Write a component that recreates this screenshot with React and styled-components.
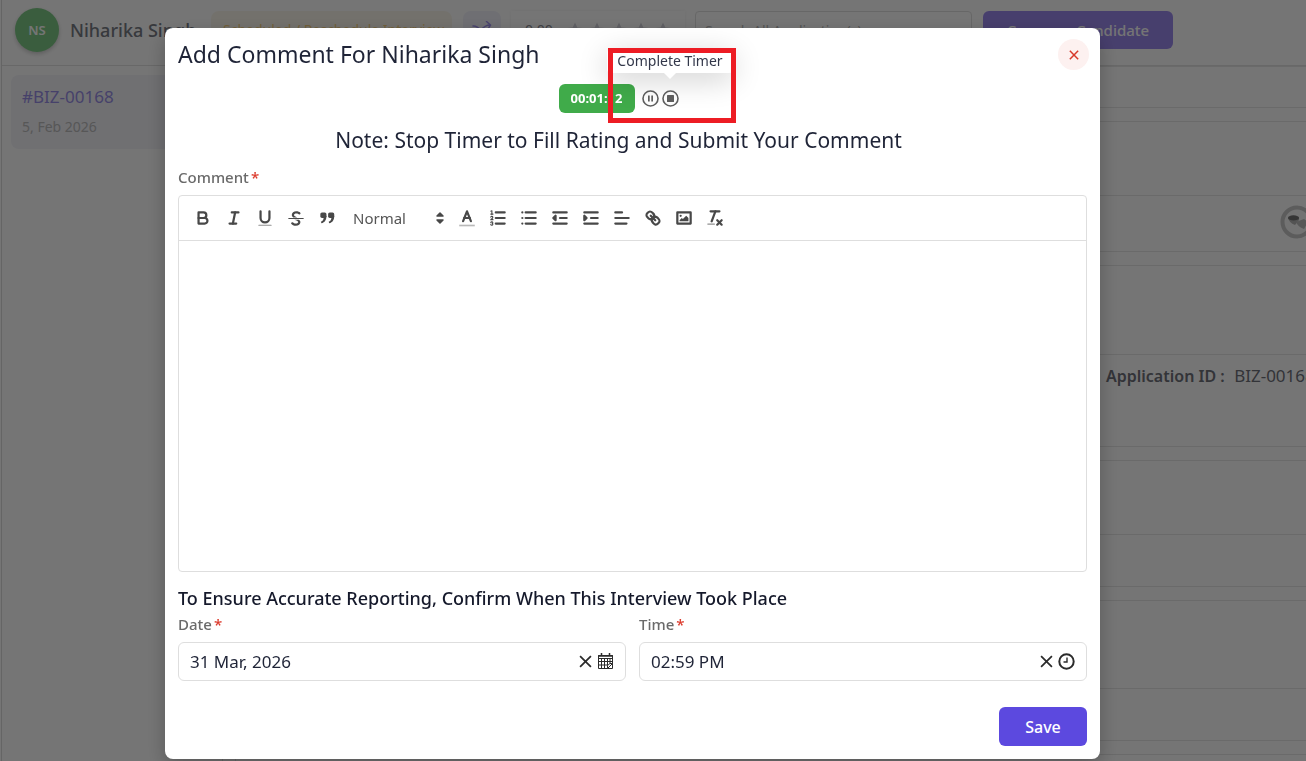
import React, { useState } from "react";
import styled, { createGlobalStyle } from "styled-components";

const GlobalStyle = createGlobalStyle`
  *, *::before, *::after { box-sizing: border-box; }
  body {
    margin: 0;
    overflow: hidden;
    background: #fff;
    font-family: "Noto Sans", "Open Sans", sans-serif;
    font-size: 16px;
    line-height: 24px;
    color: #1f2437;
  }
  h1, h2, h3, p { margin: 0; font-weight: 400; }
  button, input, select, textarea { font: inherit; color: inherit; }
  button { padding: 0; border: 0; background: none; cursor: pointer; }
  svg { display: block; }
`;

/* ---------- page behind the dialog ---------- */

const Page = styled.div`
  height: 100vh;
  margin-left: 1px;
  border-left: 1px solid #dcdcdc;
  overflow: hidden;
`;

const TopBar = styled.header`
  display: flex;
  align-items: flex-start;
  height: 66px;
  padding: 8px 13px;
  border-bottom: 1px solid #e2e2e2;
  white-space: nowrap;
`;

const Avatar = styled.span`
  flex: none;
  width: 44px;
  height: 44px;
  border-radius: 50%;
  background: #7ecb87;
  color: #fff;
  font-size: 13px;
  font-weight: 600;
  line-height: 44px;
  text-align: center;
  box-shadow: 0 2px 4px rgba(0, 0, 0, 0.2);
`;

const CandidateName = styled.h2`
  width: 141px;
  margin: 10px 0 0 11px;
  font-size: 18px;
  font-weight: 500;
  color: #797c86;
`;

const StatusBadge = styled.span`
  width: 241px;
  height: 38px;
  margin: 3px 11px 0 0;
  padding: 7px 12px;
  border-radius: 8px;
  background: #fbf7ec;
  color: #f5cf7f;
  font-size: 14px;
`;

const ShuffleButton = styled.button`
  display: grid;
  place-items: center;
  width: 38px;
  height: 38px;
  margin: 3px 10px 0 0;
  border-radius: 8px;
  background: #f1f1fa;
  color: #a093ee;
`;

const RatingBox = styled.div`
  display: flex;
  align-items: center;
  gap: 8px;
  width: 174px;
  height: 38px;
  margin: 3px 10px 0 0;
  padding: 0 14px;
  font-size: 14px;
  color: #8a8c94;
  box-shadow: 0 0 4px rgba(0, 0, 0, 0.06);
`;

const Stars = styled.span`
  display: flex;
  gap: 6px;
  margin-left: 6px;
`;

const SearchInput = styled.input`
  width: 277px;
  height: 38px;
  margin: 3px 11px 0 0;
  padding: 0 9px;
  border: 1px solid #e0e0e0;
  border-radius: 4px;
  background: transparent;
  font-size: 14px;
  &::placeholder { color: #b8b8b8; opacity: 1; }
`;

const CompareButton = styled.button`
  width: 190px;
  height: 38px;
  margin-top: 3px;
  border-radius: 6px;
  background: #9c8aee;
  color: #fff;
  font-size: 15px;
  font-weight: 500;
`;

const Columns = styled.div`
  display: flex;
`;

const SideList = styled.aside`
  flex: none;
  width: 221px;
  height: 100vh;
  padding: 9px;
  border-right: 1px solid #e2e2e2;
`;

const ApplicationCard = styled.a`
  display: flex;
  flex-direction: column;
  gap: 6px;
  height: 74px;
  padding: 10px 11px;
  border-radius: 8px;
  background: #f3f3f9;
  color: #9a8fe8;
  font-size: 17px;
  text-decoration: none;
`;

const CardDate = styled.span`
  font-size: 14px;
  color: #bdbdbd;
`;

const Main = styled.main`
  flex: 1;
  min-width: 0;
  padding-left: 12px;
  overflow: hidden;
`;

const Panel = styled.section`
  width: calc(100% + 12px);
  margin-bottom: 13px;
  border: 1px solid #e7e7e7;
`;

const PanelRow = styled.div`
  display: flex;
  justify-content: flex-end;
  height: ${(p) => p.$h}px;
  padding: 9px 3px 9px 0;
  color: #6f717b;
  white-space: nowrap;
  & + & { border-top: 1px solid #e7e7e7; }
`;

const ApplicationId = styled.p`
  width: 208px;
  font-size: 17px;
  b { margin-right: 5px; font-size: 16px; font-weight: 600; }
`;

/* ---------- dialog ---------- */

const Backdrop = styled.div`
  position: fixed;
  inset: 0;
  padding: 28px 206px 0 165px;
  background: rgba(0, 0, 0, 0.54);
`;

const Dialog = styled.form`
  display: flex;
  flex-direction: column;
  padding: 11px 13px 13px;
  border-radius: 8px;
  background: #fff;
  box-shadow: 0 8px 20px rgba(0, 0, 0, 0.25);
`;

const DialogHeader = styled.div`
  display: flex;
  justify-content: space-between;
  align-items: flex-start;
  height: 32px;
  margin-right: -2px;
`;

const Title = styled.h1`
  font-size: 23px;
  line-height: 31px;
`;

const CloseButton = styled.button`
  display: grid;
  place-items: center;
  width: 31px;
  height: 31px;
  border-radius: 50%;
  background: #fdf1f0;
  color: #d8392b;
`;

const TimerBlock = styled.div`
  display: flex;
  flex-direction: column;
  align-items: center;
  padding: 13px 28px 0 0;
`;

const TimerRow = styled.div`
  display: flex;
  align-items: center;
  gap: 3px;
`;

const TimerValue = styled.span`
  min-width: 76px;
  margin-right: 4px;
  border-radius: 6px;
  background: #40ab4a;
  color: #fff;
  font-size: 13px;
  font-weight: 700;
  line-height: 29px;
  text-align: center;
`;

const RoundButton = styled.button`
  position: relative;
  color: #5f5f5f;
`;

const Tooltip = styled.span`
  position: absolute;
  left: 50%;
  bottom: 34px;
  z-index: 1;
  transform: translateX(-50%);
  width: 126px;
  border-radius: 4px;
  background: #fff;
  color: #33384a;
  font-size: 14px;
  line-height: 24px;
  text-align: center;
  white-space: nowrap;
  box-shadow: 0 6px 30px rgba(0, 0, 0, 0.2);
  &::after {
    content: "";
    position: absolute;
    top: 100%;
    left: 50%;
    margin-left: -6px;
    border: 6px solid transparent;
    border-top-color: #fff;
    border-bottom: 0;
  }
`;

const Highlight = styled.span`
  position: absolute;
  left: -54px;
  top: -42px;
  z-index: 2;
  width: 128px;
  height: 75px;
  border: 5px solid #ed1c24;
  pointer-events: none;
`;

const Note = styled.p`
  margin: 11px 0;
  font-size: 21px;
  line-height: 32px;
`;

const Field = styled.div`
  display: flex;
  flex-direction: column;
  flex: 1;
  min-width: 0;
`;

const Label = styled.label`
  margin-bottom: 8px;
  font-size: 15px;
  font-weight: 500;
  line-height: 20px;
  color: #6a6a6a;
`;

const Required = styled.span`
  margin-left: 2px;
  color: #dc3a2c;
`;

const Editor = styled.div`
  border: 1px solid #dedede;
  border-radius: 4px;
`;

const Toolbar = styled.div`
  display: flex;
  align-items: center;
  height: 45px;
  padding: 0 8px;
  border-bottom: 1px solid #dedede;
`;

const ToolButton = styled.button`
  display: grid;
  place-items: center;
  width: 31px;
  height: 24px;
  .s, .t { fill: none; stroke: #484848; stroke-width: 2; stroke-linecap: round; stroke-linejoin: round; }
  .t { stroke-width: 1; }
  .f { fill: #484848; }
`;

const FormatPicker = styled.span`
  display: flex;
  align-items: center;
  width: 93px;
  margin: 0 5px 0 11px;
  color: #555;
`;

const FormatSelect = styled.select`
  flex: 1;
  min-width: 0;
  padding: 0;
  border: 0;
  background: none;
  appearance: none;
  font-size: 15px;
`;

const EditorArea = styled.textarea`
  display: block;
  width: 100%;
  height: 330px;
  padding: 12px;
  border: 0;
  outline: 0;
  background: transparent;
  resize: none;
`;

const SectionTitle = styled.h3`
  margin-top: 14px;
  font-size: 18px;
  line-height: 24px;
  font-weight: 500;
  color: #15192b;
`;

const FieldRow = styled.div`
  display: flex;
  gap: 13px;
  margin-top: 4px;
`;

const InputBox = styled.div`
  display: flex;
  align-items: center;
  gap: 5px;
  height: 39px;
  padding: 0 11px;
  border: 1px solid #dedede;
  border-radius: 6px;
  color: #2b2b2b;
`;

const TextInput = styled.input`
  flex: 1;
  min-width: 0;
  padding: 0;
  border: 0;
  outline: 0;
  background: none;
  font-size: 17px;
  color: #1f2437;
`;

const Footer = styled.div`
  display: flex;
  justify-content: flex-end;
  margin-top: 26px;
`;

const SaveButton = styled.button`
  width: 88px;
  height: 39px;
  border-radius: 6px;
  background: #5c49df;
  color: #fff;
  font-size: 16px;
  font-weight: 500;
`;

/* ---------- icons ---------- */

const toolIcons = {
  Bold: (
    <>
      <path className="s" d="M5,4H9.5A2.5,2.5,0,0,1,12,6.5v0A2.5,2.5,0,0,1,9.5,9H5A0,0,0,0,1,5,9V4A0,0,0,0,1,5,4Z" />
      <path className="s" d="M5,9h5.5A2.5,2.5,0,0,1,13,11.5v0A2.5,2.5,0,0,1,10.5,14H5a0,0,0,0,1,0,0V9A0,0,0,0,1,5,9Z" />
    </>
  ),
  Italic: (
    <>
      <line className="s" x1="7" x2="13" y1="4" y2="4" />
      <line className="s" x1="5" x2="11" y1="14" y2="14" />
      <line className="s" x1="8" x2="10" y1="14" y2="4" />
    </>
  ),
  Underline: (
    <>
      <path className="s" d="M5,3V9a4.012,4.012,0,0,0,4,4H9a4.012,4.012,0,0,0,4-4V3" />
      <rect className="f" opacity="0.6" height="1" width="12" x="3" y="15" rx="0.5" />
    </>
  ),
  Strike: (
    <>
      <line className="t" x1="2.5" x2="15.5" y1="9.5" y2="9.5" />
      <path className="f" d="M6.5,8.5C6,8 5.2,7.300 5.200,6.300C5.200,4.300 7,3 9.200,3C10.800,3 12.200,3.500 12.900,4.300C13.400,4.900 12.900,5.900 12,5.800C11.300,5.700 10.800,5 9.300,5C8,5 7.200,5.600 7.200,6.400C7.200,7.500 8.500,7.800 10,8.500Z" />
      <path className="f" d="M11.500,10.500C12.400,11 13,11.700 13,12.600C13,14.600 11.200,16 8.900,16C7,16 5.400,15.200 4.700,14.100C4.300,13.300 5.100,12.500 5.900,12.800C6.600,13.100 7.200,14 8.900,14C10.200,14 11,13.400 11,12.600C11,11.700 9.500,11.200 7.500,10.500Z" />
    </>
  ),
  Blockquote: (
    <>
      <rect className="f" height="5" width="5.500" x="3" y="4" rx="1.500" />
      <rect className="f" height="5" width="5.500" x="10" y="4" rx="1.500" />
      <path className="f" d="M8.500,7C8.500,11 7,13 4,13.800L3.500,12.300C5.500,11.500 6,10 6,8Z" />
      <path className="f" d="M15.500,7C15.500,11 14,13 11,13.800L10.500,12.300C12.500,11.500 13,10 13,8Z" />
    </>
  ),
  "Text color": (
    <>
      <rect x="2" y="15" width="14" height="1.500" fill="#b9b9b9" />
      <polyline className="s" points="5.5 11.800 9 3 12.500 11.800" />
      <line className="s" x1="11.600" x2="6.400" y1="9" y2="9" />
    </>
  ),
  "Ordered list": (
    <>
      <line className="s" x1="7" x2="15" y1="4" y2="4" />
      <line className="s" x1="7" x2="15" y1="9" y2="9" />
      <line className="s" x1="7" x2="15" y1="14" y2="14" />
      <line className="t" x1="2.5" x2="4.5" y1="5.5" y2="5.5" />
      <path className="f" d="M3.5,6A0.5,0.5,0,0,1,3,5.500V3.085l-0.276.138A0.5,0.5,0,0,1,2.053,3c-0.124-.247-0.023-0.324.224-0.447l1-.5A0.5,0.5,0,0,1,4,2.500v3A0.5,0.5,0,0,1,3.500,6Z" />
      <path className="t" d="M4.5,10.5h-2c0-.234,1.850-1.076,1.850-2.234A0.959,0.959,0,0,0,2.500,8.156" />
      <path className="t" d="M2.5,14.846a0.959,0.959,0,0,0,1.850-.109A0.700,0.700,0,0,0,3.750,14a0.688,0.688,0,0,0,.600-0.736,0.959,0.959,0,0,0-1.850-.109" />
    </>
  ),
  "Bullet list": (
    <>
      <line className="s" x1="6" x2="15" y1="4" y2="4" />
      <line className="s" x1="6" x2="15" y1="9" y2="9" />
      <line className="s" x1="6" x2="15" y1="14" y2="14" />
      <line className="s" x1="3" x2="3" y1="4" y2="4" />
      <line className="s" x1="3" x2="3" y1="9" y2="9" />
      <line className="s" x1="3" x2="3" y1="14" y2="14" />
    </>
  ),
  Outdent: (
    <>
      <line className="s" x1="3" x2="15" y1="14" y2="14" />
      <line className="s" x1="3" x2="15" y1="4" y2="4" />
      <line className="s" x1="9" x2="15" y1="9" y2="9" />
      <polygon fill="#484848" stroke="#484848" strokeWidth="2" strokeLinejoin="round" points="5 7 5 11 3 9 5 7" />
    </>
  ),
  Indent: (
    <>
      <line className="s" x1="3" x2="15" y1="14" y2="14" />
      <line className="s" x1="3" x2="15" y1="4" y2="4" />
      <line className="s" x1="9" x2="15" y1="9" y2="9" />
      <polygon fill="#484848" stroke="#484848" strokeWidth="2" strokeLinejoin="round" points="3 7 3 11 5 9 3 7" />
    </>
  ),
  Align: (
    <>
      <line className="s" x1="3" x2="9" y1="4" y2="4" />
      <line className="s" x1="3" x2="15" y1="9" y2="9" />
      <line className="s" x1="3" x2="13" y1="14" y2="14" />
    </>
  ),
  Link: (
    <>
      <line className="s" x1="7" x2="11" y1="7" y2="11" />
      <path className="s" d="M8.9,4.577a3.476,3.476,0,0,1,.36,4.679A3.476,3.476,0,0,1,4.577,8.900C3.185,7.500,2.035,6.400,4.217,4.217S7.500,3.185,8.900,4.577Z" />
      <path className="s" d="M13.423,9.100a3.476,3.476,0,0,0-4.679-.36,3.476,3.476,0,0,0,.360,4.679c1.392,1.392,2.500,2.542,4.679.360S14.815,10.500,13.423,9.100Z" />
    </>
  ),
  Image: (
    <>
      <rect className="s" height="10" width="12" x="3" y="4" />
      <circle className="f" cx="6" cy="7" r="1" />
      <polyline className="f" points="5 12 5 11 7 9 8 10 11 7 13 9 13 12 5 12" />
    </>
  ),
  "Clear formatting": (
    <>
      <line className="s" x1="5" x2="13" y1="3" y2="3" />
      <line className="s" x1="6" x2="9.350" y1="12" y2="3" />
      <line className="s" x1="11" x2="15" y1="11" y2="15" />
      <line className="s" x1="15" x2="11" y1="11" y2="15" />
      <rect className="f" opacity="0.6" height="1" width="7" x="2" y="14" rx="0.5" />
    </>
  ),
};

const Tool = ({ name }) => (
  <ToolButton type="button" aria-label={name}>
    <svg width="20" height="20" viewBox="0 0 18 18">{toolIcons[name]}</svg>
  </ToolButton>
);

const Cross = ({ size, weight }) => (
  <svg width={size} height={size} viewBox="0 0 12 12" stroke="currentColor" strokeWidth={weight} fill="none">
    <path d="M1 1L11 11M11 1L1 11" />
  </svg>
);

const Star = () => (
  <svg width="16" height="16" viewBox="0 0 16 16" fill="#d2d2da">
    <path d="M8 0.500L10.300 5.400L15.600 6L11.700 9.700L12.700 15L8 12.400L3.300 15L4.300 9.700L0.400 6L5.700 5.400Z" />
  </svg>
);

const Shuffle = () => (
  <svg width="20" height="18" viewBox="0 0 20 18" fill="none" stroke="currentColor" strokeWidth="1.500" strokeLinecap="round" strokeLinejoin="round">
    <path d="M1 5C8 4 9 14 18 14M1 14C8 14 9 4 18 4M14.500 0.500L18.500 4L16 8M15 11L18.500 14L15 17" />
  </svg>
);

const PauseIcon = () => (
  <svg width="17" height="17" viewBox="0 0 17 17">
    <circle cx="8.500" cy="8.500" r="7.500" fill="none" stroke="currentColor" strokeWidth="1.600" />
    <path d="M6 5.500H7.700V11.500H6ZM9.300 5.500H11V11.500H9.300Z" fill="currentColor" />
  </svg>
);

const StopIcon = () => (
  <svg width="17" height="17" viewBox="0 0 17 17">
    <circle cx="8.500" cy="8.500" r="7.500" fill="none" stroke="currentColor" strokeWidth="1.600" />
    <rect x="5" y="5" width="7" height="7" rx="0.500" fill="currentColor" />
  </svg>
);

const SortIcon = () => (
  <svg width="12" height="20" viewBox="0 0 12 20" fill="#484848" stroke="#484848" strokeWidth="1.500" strokeLinejoin="round">
    <path d="M6 5L9 8H3ZM3 12H9L6 15Z" />
  </svg>
);

const CalendarIcon = () => (
  <svg width="17" height="17" viewBox="0 0 17 17" fill="none" stroke="currentColor" strokeWidth="1">
    <path d="M1.500 2.500H15.500V10.500L10.500 15.500H1.500ZM15.500 10.500V15.500H10.500V12.500L13 10.500H15.500" />
    <path d="M1.500 5.500H15.500M1.500 8.500H15.500M1.500 12H10.500M4.500 5.500V15.500M7.500 5.500V15.500M10.500 5.500V12.500M13 5.500V10.500" />
    <path d="M1 3H16M4.500 0V3M12.500 0V3" strokeWidth="1.500" />
  </svg>
);

const ClockIcon = () => (
  <svg width="17" height="17" viewBox="0 0 17 17" fill="none" stroke="currentColor">
    <circle cx="8.500" cy="8.500" r="7.200" strokeWidth="2" />
    <path d="M9 4.500V9H5.500" strokeWidth="1.400" />
  </svg>
);

const ProfileIcon = () => (
  <svg width="34" height="34" viewBox="0 0 34 34">
    <circle cx="17" cy="17" r="14.500" fill="#fafafa" stroke="#c9c9c9" strokeWidth="4" />
    <path d="M8 12Q13 8 19 12V15L15 20Q9 18 8 12Z" fill="#b5b5b5" />
    <ellipse cx="13.500" cy="13" rx="5.500" ry="2.500" fill="#777" />
    <path d="M16 17L24 14L28 17L24 24Q18 22 16 17Z" fill="#bdbdbd" />
  </svg>
);

export default function App() {
  const [comment, setComment] = useState("");
  const [date, setDate] = useState("31 Mar, 2026");
  const [time, setTime] = useState("02:59 PM");

  return (
    <>
      <GlobalStyle />
      <Page>
        <TopBar>
          <Avatar>NS</Avatar>
          <CandidateName>Niharika Singh</CandidateName>
          <StatusBadge>Scheduled / Reschedule Interview</StatusBadge>
          <ShuffleButton type="button" aria-label="Shuffle"><Shuffle /></ShuffleButton>
          <RatingBox>
            0.00
            <Stars>{[1, 2, 3, 4, 5].map((n) => <Star key={n} />)}</Stars>
          </RatingBox>
          <SearchInput aria-label="Search" placeholder="Search All Application(s)" />
          <CompareButton type="button">Compare Candidate</CompareButton>
        </TopBar>
        <Columns>
          <SideList>
            <ApplicationCard href="#application">
              #BIZ-00168
              <CardDate>5, Feb 2026</CardDate>
            </ApplicationCard>
          </SideList>
          <Main>
            <Panel><PanelRow $h={40} /></Panel>
            <Panel>
              <PanelRow $h={73} />
              <PanelRow $h={56}><ProfileIcon /></PanelRow>
            </Panel>
            <Panel>
              <PanelRow $h={88} />
              <PanelRow $h={92}>
                <ApplicationId><b>Application ID :</b> BIZ-00168</ApplicationId>
              </PanelRow>
            </Panel>
            <Panel>
              <PanelRow $h={73} />
              <PanelRow $h={52} />
            </Panel>
            <Panel>
              <PanelRow $h={87} />
              <PanelRow $h={52} />
            </Panel>
            <Panel><PanelRow $h={73} /></Panel>
          </Main>
        </Columns>
      </Page>

      <Backdrop>
        <Dialog role="dialog" aria-labelledby="dialog-title" onSubmit={(e) => e.preventDefault()}>
          <DialogHeader>
            <Title id="dialog-title">Add Comment For Niharika Singh</Title>
            <CloseButton type="button" aria-label="Close"><Cross size={10} weight={1.8} /></CloseButton>
          </DialogHeader>

          <TimerBlock>
            <TimerRow>
              <TimerValue>00:01:12</TimerValue>
              <RoundButton type="button" aria-label="Pause Timer"><PauseIcon /></RoundButton>
              <RoundButton type="button" aria-label="Complete Timer">
                <StopIcon />
                <Tooltip role="tooltip">Complete Timer</Tooltip>
                <Highlight />
              </RoundButton>
            </TimerRow>
            <Note>Note: Stop Timer to Fill Rating and Submit Your Comment</Note>
          </TimerBlock>

          <Field>
            <Label htmlFor="comment">Comment<Required>*</Required></Label>
            <Editor>
              <Toolbar>
                {["Bold", "Italic", "Underline", "Strike", "Blockquote"].map((n) => <Tool key={n} name={n} />)}
                <FormatPicker>
                  <FormatSelect aria-label="Text style" defaultValue="Normal">
                    <option>Normal</option>
                    <option>Heading 1</option>
                    <option>Heading 2</option>
                  </FormatSelect>
                  <SortIcon />
                </FormatPicker>
                {["Text color", "Ordered list", "Bullet list", "Outdent", "Indent", "Align", "Link", "Image", "Clear formatting"].map((n) => <Tool key={n} name={n} />)}
              </Toolbar>
              <EditorArea id="comment" value={comment} onChange={(e) => setComment(e.target.value)} />
            </Editor>
          </Field>

          <SectionTitle>To Ensure Accurate Reporting, Confirm When This Interview Took Place</SectionTitle>
          <FieldRow>
            <Field>
              <Label htmlFor="date">Date<Required>*</Required></Label>
              <InputBox>
                <TextInput id="date" value={date} onChange={(e) => setDate(e.target.value)} />
                <button type="button" aria-label="Clear date" onClick={() => setDate("")}><Cross size={13} weight={1.6} /></button>
                <button type="button" aria-label="Open calendar"><CalendarIcon /></button>
              </InputBox>
            </Field>
            <Field>
              <Label htmlFor="time">Time<Required>*</Required></Label>
              <InputBox>
                <TextInput id="time" value={time} onChange={(e) => setTime(e.target.value)} />
                <button type="button" aria-label="Clear time" onClick={() => setTime("")}><Cross size={13} weight={1.6} /></button>
                <button type="button" aria-label="Open clock"><ClockIcon /></button>
              </InputBox>
            </Field>
          </FieldRow>
          <Footer><SaveButton type="submit">Save</SaveButton></Footer>
        </Dialog>
      </Backdrop>
    </>
  );
}
